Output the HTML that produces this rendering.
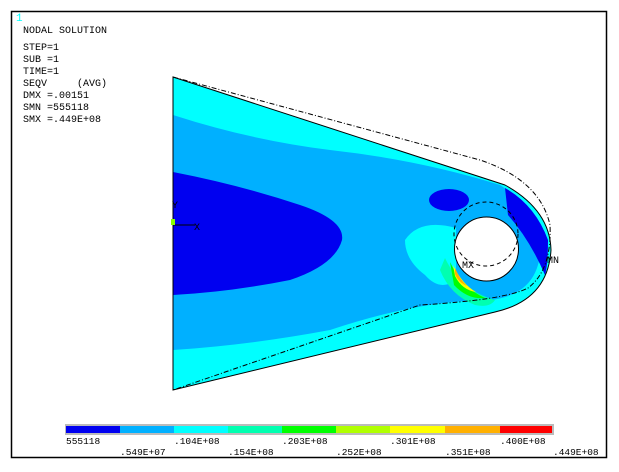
<!DOCTYPE html><html><head><style>
body{margin:0;background:#fff;width:619px;height:472px;overflow:hidden;font-family:"Liberation Mono",monospace}
text{white-space:pre}
</style></head><body>
<svg width="619" height="472" xmlns="http://www.w3.org/2000/svg" style="position:absolute;left:0;top:0">
<rect x="11.5" y="11.5" width="595" height="446" fill="#fff" stroke="#000" stroke-width="1.5"/>
<defs><clipPath id="c"><path d="M173,77 L505,185 Q550,210 551,250 Q548,300 495,312 L173,390 Z"/></clipPath></defs>
<g clip-path="url(#c)">
<rect x="160" y="60" width="400" height="340" fill="#00ffff"/>
<path d="M173,115 Q250,140 330,150 Q420,160 500,185 Q540,210 540,255 Q535,295 490,300 Q420,300 330,330 Q250,345 173,350 Z" fill="#00b0ff"/>
<path d="M173,172 Q240,185 300,205 Q345,220 342,240 Q335,265 290,280 Q230,292 173,295 Z" fill="#0000f0"/>
<ellipse cx="449" cy="200" rx="20" ry="11" fill="#0000f0"/>
<path d="M505,188 Q535,205 548,240 Q548,265 545,275 Q530,240 508,215 Z" fill="#0000f0"/>
<path d="M405,240 Q420,218 456,228 L456,280 Q440,292 425,275 Q405,260 405,240 Z" fill="#00ffff"/>
<path d="M445,258 Q460,290 495,300 Q490,308 475,305 Q450,295 440,270 Z" fill="#00ffb0"/>
<path d="M450,262 Q462,288 485,298 Q468,300 454,285 Z" fill="#00ff00"/>
<path d="M453,265 Q462,284 476,292 Q462,290 455,276 Z" fill="#ffff00"/>
<path d="M455,268 Q460,280 467,286 Q458,282 455,274 Z" fill="#ffb000"/>
<path d="M513,232 Q519,240 517,258 Q513,246 511,236 Z" fill="#b0ff00"/>
</g>
<path d="M173,77 L505,185 Q550,210 551,250 Q548,300 495,312 L173,390 Z" fill="none" stroke="#000" stroke-width="1"/>
<circle cx="486.5" cy="249" r="32" fill="#fff" stroke="#000"/>
<circle cx="486" cy="234" r="32" fill="none" stroke="#000" stroke-dasharray="4,3"/>
<path d="M173,77 L480,160 Q540,180 550,225 Q552,270 528,288 Q505,300 420,305 L173,390" fill="none" stroke="#000" stroke-dasharray="5,2,1,2"/>
<line x1="173" y1="225" x2="195" y2="225" stroke="#000"/><line x1="173" y1="225" x2="173" y2="210" stroke="#000"/>
<rect x="171" y="219" width="4" height="6" fill="#8f0"/>
<g font-family="Liberation Mono,monospace" font-size="10" fill="#000">
<text x="16" y="21" fill="#0ff" font-size="11">1</text>
<text x="23" y="33">NODAL SOLUTION</text>
<text x="23" y="50">STEP=1</text><text x="23" y="62">SUB =1</text><text x="23" y="74">TIME=1</text>
<text x="23" y="86">SEQV     (AVG)</text><text x="23" y="98">DMX =.00151</text>
<text x="23" y="110">SMN =555118</text><text x="23" y="122">SMX =.449E+08</text>
<text x="172" y="208">Y</text><text x="194" y="230">X</text>
<text x="462" y="268">MX</text><text x="547" y="263">MN</text>
</g>
<rect x="65" y="424" width="489" height="11" fill="#bbb"/>
<rect x="66" y="426" width="54" height="7" fill="#0000f0"/>
<rect x="120" y="426" width="54" height="7" fill="#00b0ff"/>
<rect x="174" y="426" width="54" height="7" fill="#00ffff"/>
<rect x="228" y="426" width="54" height="7" fill="#00ffb0"/>
<rect x="282" y="426" width="54" height="7" fill="#00ff00"/>
<rect x="336" y="426" width="54" height="7" fill="#b0ff00"/>
<rect x="390" y="426" width="55" height="7" fill="#ffff00"/>
<rect x="445" y="426" width="55" height="7" fill="#ffb000"/>
<rect x="500" y="426" width="52" height="7" fill="#ff0000"/>
<g font-family="Liberation Mono,monospace" font-size="9.5" fill="#000">
<text x="66" y="444">555118</text><text x="174" y="444">.104E+08</text><text x="282" y="444">.203E+08</text>
<text x="390" y="444">.301E+08</text><text x="500" y="444">.400E+08</text>
<text x="120" y="455">.549E+07</text><text x="228" y="455">.154E+08</text><text x="336" y="455">.252E+08</text>
<text x="445" y="455">.351E+08</text><text x="553" y="455">.449E+08</text>
</g>
</svg></body></html>
